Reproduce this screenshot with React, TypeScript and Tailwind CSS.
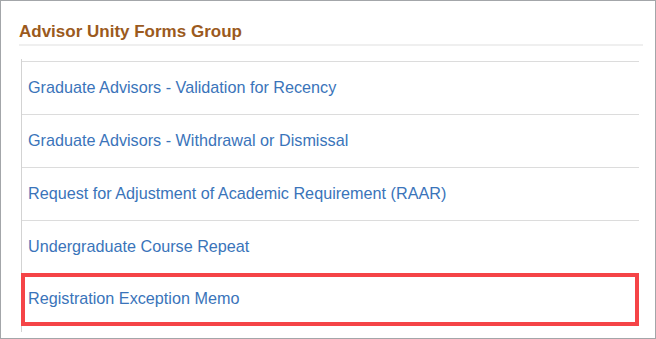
import React from "react";

const rows = [
  "Graduate Advisors - Validation for Recency",
  "Graduate Advisors - Withdrawal or Dismissal",
  "Request for Adjustment of Academic Requirement (RAAR)",
  "Undergraduate Course Repeat",
];

export default function App() {
  return (
    <div
      className="w-[656px] h-[339px] border border-[#a3a6a9] bg-white overflow-hidden"
      style={{ fontFamily: '"Liberation Sans", Arial, sans-serif' }}
    >
      <div className="pl-[18px] pr-[12px] pt-[21px]">
        <h2 className="text-[17px] leading-[20px] font-bold text-[#9b5a1d] pb-[2px] border-b-2 border-[#efefef]">
          Advisor Unity Forms Group
        </h2>
      </div>
      <div className="ml-[20px] mr-[16px] mt-[13px] border-l border-[#d3d3d3] pt-[2px] pb-[6px]">
        {rows.map((r) => (
          <div
            key={r}
            className="h-[53px] border-t border-[#dcdcdc] flex items-center pl-[6px] pb-[2px] text-[16.2px] text-[#3a74ba]"
          >
            {r}
          </div>
        ))}
        <div className="h-[53px] -ml-px border-4 border-[#f54447] flex items-center pl-[3px] pb-[2px] text-[16.2px] text-[#3a74ba]">
          Registration Exception Memo
        </div>
      </div>
    </div>
  );
}
